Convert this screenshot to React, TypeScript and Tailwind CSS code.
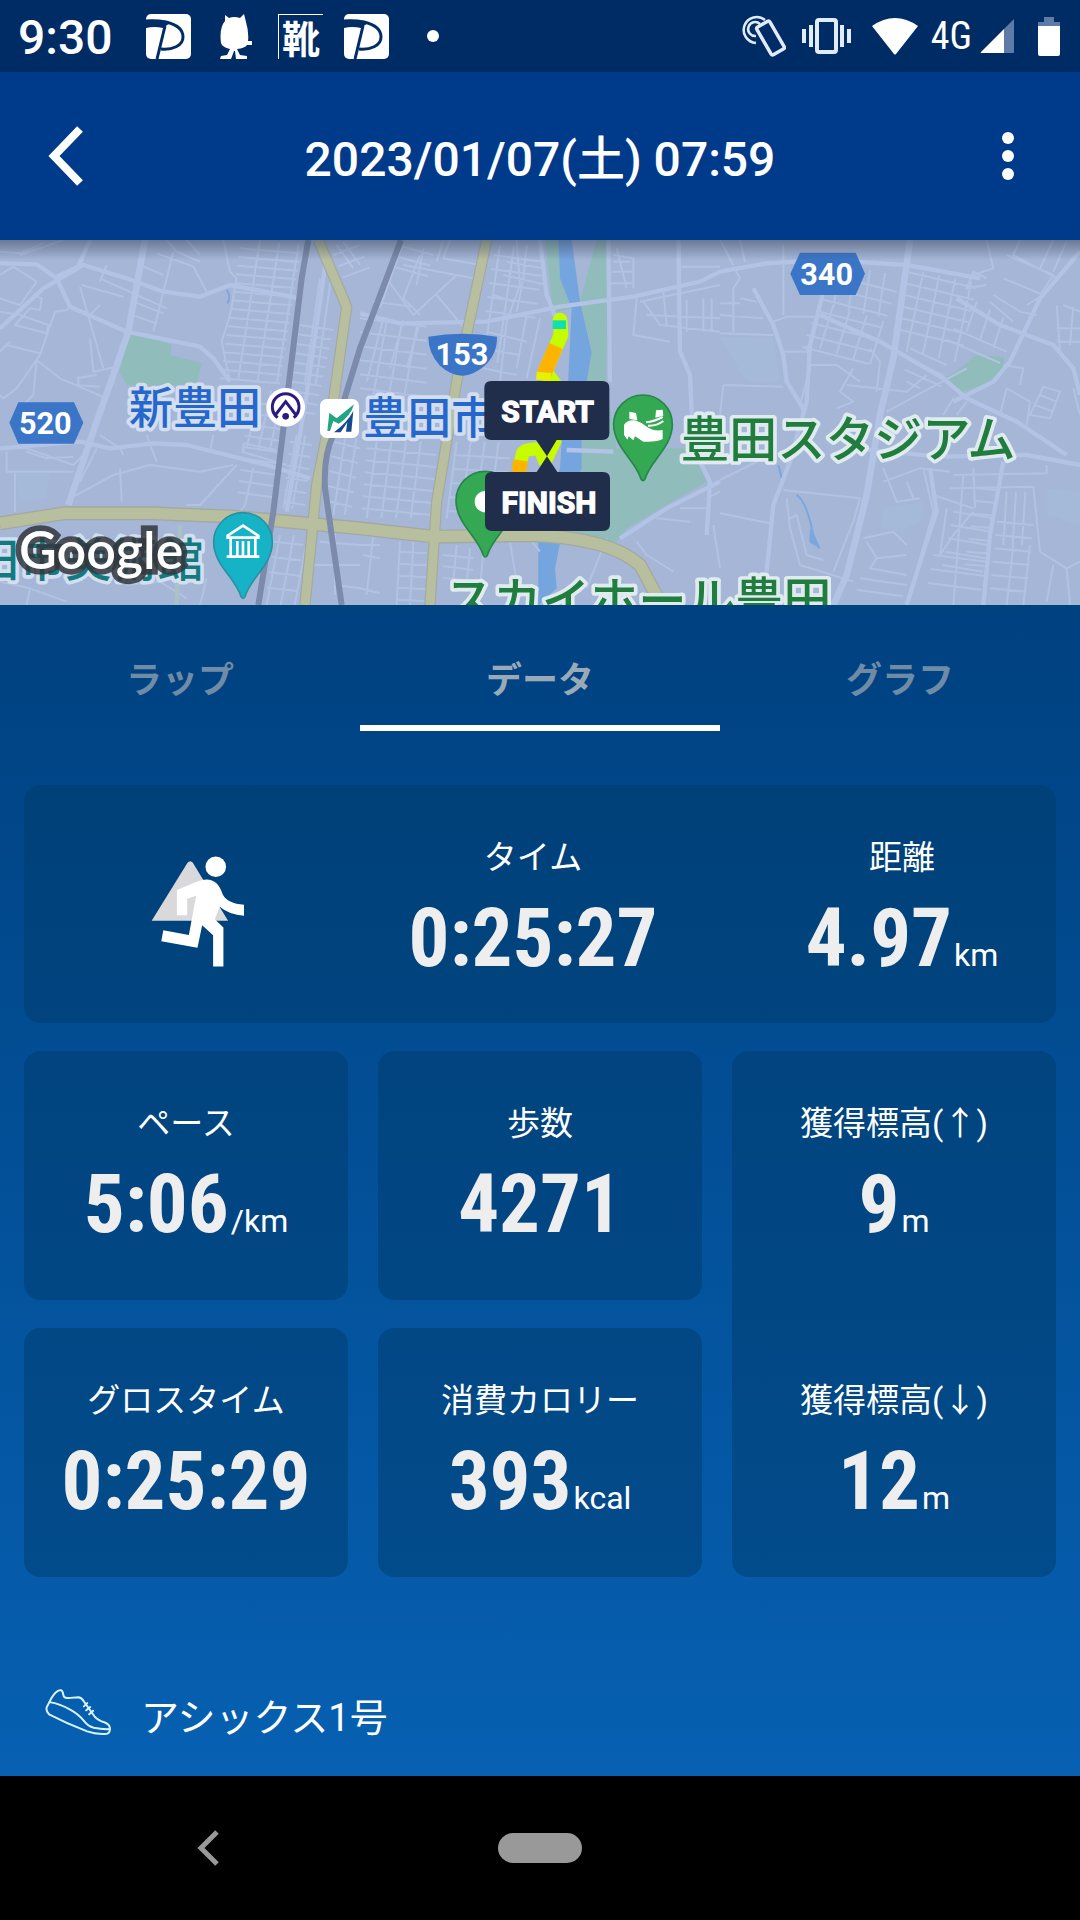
import React from 'react';

const ROBOTO = "font-['Roboto','Noto_Sans_CJK_JP',sans-serif]";

interface MetricProps {
  label: string;
  value: string;
  unit?: string;
}

function Metric({ label, value, unit }: MetricProps) {
  return (
    <div className="flex h-[249px] flex-col items-center pt-12">
      <dt className="text-[33px] leading-[50px]">{label}</dt>
      <dd className="flex items-baseline gap-0.5 pt-2">
        <span className="font-['Roboto_Condensed','Liberation_Sans_Narrow','Roboto',sans-serif] text-[81px] leading-[96px] font-bold text-[#eee]">
          {value}
        </span>
        {unit && <span className="text-[32px]">{unit}</span>}
      </dd>
    </div>
  );
}

function PayIcon() {
  return (
    <svg viewBox="0 0 45 45" className="h-[45px] w-[45px]" aria-hidden="true">
      <rect width="45" height="45" rx="5" fill="#fff" />
      <path d="M0 7Q10 6 20 8Q37 12 37 23C37 32 26 36 15 35" fill="none" stroke="#002d66" strokeWidth="3" />
      <path d="M0 6Q12 5 24 9L17 14Q8 12 0 14Z" fill="#002d66" />
      <path d="M19 12L11 45" stroke="#002d66" strokeWidth="3" />
    </svg>
  );
}

function StatusBar() {
  return (
    <div className="flex h-[72px] items-center justify-between bg-[#002c66] pr-5 pl-[18px] text-white">
      <div className="flex items-center">
        <span className="w-32 pt-1 text-5xl font-medium">9:30</span>
        <PayIcon />
        <svg viewBox="0 0 33 45" className="ml-[29px] h-[45px] w-[33px]" aria-hidden="true">
          <path
            d="M5 1L9 4Q14 2 20 4L24 0L26 8Q29 18 28 27L32 27L32 31L27 31Q25 34 17 35L20 41L27 42L27 45H16L15 37H14L11 45H0L1 42L7 41L10 35Q2 33 1 29Q-1 14 5 7Z"
            fill="#fff"
          />
        </svg>
        <span className="ml-[25px] flex h-[45px] w-[45px] items-center justify-center border-t border-l border-white font-['Noto_Sans_CJK_JP',sans-serif] text-[38px] leading-none font-bold">
          靴
        </span>
        <span className="ml-[21px]">
          <PayIcon />
        </span>
        <span className="ml-[38px] h-3 w-3 rounded-full bg-white" />
      </div>
      <div className="flex items-center">
        <svg viewBox="0 0 44 42" className="h-[42px] w-11" fill="none" stroke="#e2ebfa" aria-hidden="true">
          <rect x="21" y="7" width="15" height="32" rx="2" strokeWidth="3.5" transform="rotate(-30 28.5 23)" />
          <path d="M14 28A13 13 0 1 1 23 5" strokeWidth="2.5" />
          <path d="M14 21A7 7 0 1 1 18 9" strokeWidth="2.5" />
        </svg>
        <svg viewBox="0 0 49 36" className="ml-4 h-9 w-[49px]" fill="#e2ebfa" aria-hidden="true">
          <path d="M0 11h4v14H0zM7 7h4v22H7zM38 7h4v22h-4zM45 11h4v14h-4z" />
          <rect x="15" y="2" width="19" height="32" rx="2" fill="none" stroke="#e2ebfa" strokeWidth="4" />
        </svg>
        <svg viewBox="0 0 46 37" className="ml-[21px] h-[37px] w-[46px]" aria-hidden="true">
          <path d="M0 8Q23 -8 46 8L24 36Q23 37 22 36Z" fill="#fff" />
        </svg>
        <span className="ml-[13px] font-['Roboto_Condensed','Liberation_Sans_Narrow','Roboto',sans-serif] text-[38px]">4G</span>
        <svg viewBox="0 0 34 34" className="ml-2 h-[34px] w-[34px]" aria-hidden="true">
          <path d="M34 0V34H24V10Z" fill="#5d7ba6" />
          <path d="M24 10V34H1Q0 34 1 33Z" fill="#fff" />
        </svg>
        <svg viewBox="0 0 22 39" className="ml-6 h-[39px] w-[22px]" aria-hidden="true">
          <path d="M6 0H16V5H22V9H0V5H6Z" fill="#5d7ba6" />
          <path d="M0 9H22V37Q22 39 20 39H2Q0 39 0 37Z" fill="#fff" />
        </svg>
      </div>
    </div>
  );
}

// Parallel line segments, each one shifted by (dx, dy) from the last
function hatch(x1: number, y1: number, x2: number, y2: number, dx: number, dy: number, count: number) {
  return Array.from({ length: count }, (_, i) => `M${x1 + dx * i} ${y1 + dy * i}L${x2 + dx * i} ${y2 + dy * i}`).join('');
}

const WEST_STREETS = [
  'M0 85L110 88L170 130L210 215L380 290M0 50L60 55L130 25M60 60L190 15M0 120L40 95L110 140L60 210L0 190M0 230L60 240L145 270L140 295L45 270L90 220L120 225L125 190L100 180',
  'M165 230L200 225L210 215M165 230L120 360L50 460L10 490L0 480M20 330L120 355M0 350L30 320M110 375L100 480L60 520M110 375L180 430L320 490M240 155L310 400M245 150L370 185M270 240L300 210M270 310L280 410L350 395M230 430L290 420M225 450L300 455M235 425V450',
  'M300 130L410 180L500 220M320 90L300 140M420 90L490 120M400 200L490 235M395 240L470 265M520 50L460 290M470 55L580 95L620 170M500 15L530 50L600 80M560 15L600 60M670 15L690 110L710 130L690 240L665 320L690 440',
  'M0 640H80L220 690L270 640M20 650V710H220M45 715V830M80 650L140 670L220 665M290 640L240 740M300 600L360 640L370 660M360 700L365 800M210 790L340 720L450 690L600 710L700 690M440 600L470 680M640 600L630 650M710 690L600 810L560 810M760 700L735 810L720 830',
  'M730 625L830 645M725 650L860 690M730 625V655M0 1040L90 1060L80 1110M90 1060L200 1100M380 1050L480 1040L560 1090M620 1030L600 1110M460 890L470 1000M1005 890V1080M960 920L1080 930M930 990H1080M1010 1050L1080 1060',
  hatch(720, 40, 900, 55, -4, 26, 16),
  hatch(780, 15, 715, 430, 58, 6, 3),
  hatch(900, 270, 1000, 285, -6, 28, 10),
  hatch(960, 130, 915, 440, 32, 8, 2),
  hatch(780, 460, 740, 640, 34, 6, 3),
  hatch(745, 500, 850, 515, -4, 34, 9),
  hatch(870, 620, 935, 630, -4, 36, 6),
  hatch(890, 600, 850, 820, 26, 2, 2),
  hatch(840, 900, 800, 1110, 42, 0, 3),
  hatch(820, 920, 910, 930, -6, 46, 4),
  hatch(1000, 620, 1080, 640, -6, 44, 5),
  hatch(1035, 610, 1000, 840, 34, 0, 2),
  hatch(1000, 60, 1080, 30, 14, 34, 3),
  hatch(1030, 20, 1080, 90, -20, 10, 2),
].join('');

const CENTER_STREETS = [
  'M130 20L60 220M180 60L130 190L180 240M130 90L340 130M80 130L160 240L290 120M190 40L170 150M250 15L230 80M40 200L160 215M70 250L20 440M130 255L90 400M180 260L140 400M230 180L330 300M270 15L250 70L360 90',
  'M470 15L480 150L440 260L420 440M500 30L490 130L470 230M440 80L550 100M430 120L560 150M400 180L460 200M380 290L500 320M370 340L480 360M370 400L470 420M500 240L470 400M540 250L500 430',
  'M840 200L1080 150M830 190L820 300L930 320M850 200L900 270L1080 290M910 170L920 270M860 240L1080 250M980 195V290M1030 190V290M1055 190V290M760 60L820 70L820 160M770 40L800 160M960 30V340M960 95H1080M760 80H810M755 110H815M750 145H815',
  'M830 920L860 960L940 1010M740 910L680 1060M450 920L470 1040M500 900L540 950M960 820H1040M890 850L990 860M1040 790L1080 770M1060 870L1080 1000M0 930H60M10 960L60 970M40 900L20 1080M0 1060L60 1075',
  hatch(110, 30, 220, 60, -8, 32, 3),
  hatch(400, 60, 550, 80, -6, 42, 5),
  hatch(420, 30, 370, 380, 42, 4, 2),
  hatch(0, 250, 200, 275, 0, 42, 6),
  hatch(80, 260, 40, 480, 46, 4, 3),
  hatch(20, 640, 230, 660, -3, 36, 6),
  hatch(50, 620, 20, 850, 44, 0, 4),
  hatch(290, 620, 260, 850, 42, 0, 4),
  hatch(280, 660, 450, 670, -3, 42, 5),
  hatch(120, 920, 110, 1110, 40, 0, 2),
  hatch(115, 950, 200, 955, 0, 36, 5),
  hatch(290, 930, 280, 1040, 40, 10, 3),
  hatch(250, 960, 340, 970, 0, 34, 3),
].join('');

const EAST_STREETS = [
  'M0 15L40 90M60 15L75 80M40 95L60 130L40 160V290M0 205H60M0 240L130 250M0 295L160 300M60 190L110 200M190 30V240M160 260L200 245H290M190 350H260M10 450L190 455M10 450L0 540M200 440L250 530M260 330L270 400L240 510',
  'M270 390L350 390L420 440M400 400L360 470L400 500L350 520M380 450L560 470L620 420M500 530L740 400M560 440L600 460M450 340L480 380L470 470M0 735L130 670M0 835L150 865M190 765L420 790L400 860L340 1010M200 790L210 880L240 990L400 1040M210 850L230 840L260 960L310 975',
  'M490 700L530 800L600 790M490 740L600 700L690 710M560 740L580 790M610 700L640 830L620 900L560 1110M700 720L980 715V690M690 760L940 755L960 950L1040 1000L1080 980M760 700L765 820M640 780L760 820M680 820L660 960L700 900L760 830',
  'M800 130L760 110L740 160L800 150M860 60L1000 120L960 180M900 15L880 60L1010 130M850 130L970 180L920 210M820 180L900 230L950 240M810 200L880 260M800 15L820 100L760 120M1000 15L960 100M1040 20L1000 110M1010 210L1020 350M1060 215L1050 330M1030 210L1080 230M1010 280H1080M1010 320H1080',
  'M850 390L910 400L900 450M860 460L840 540M860 460L930 500L920 570M970 455L1020 470L990 550L930 540ZM960 480L1010 500M945 510L1000 530M1060 460L1080 540M700 490L670 540M740 500L710 540M430 910L520 890L560 930M440 920L470 970L560 960M470 970L450 1000L560 1020M1000 990L980 1100M1040 1000L1050 1110',
  hatch(330, 120, 530, 170, -14, 36, 7),
  hatch(340, 210, 300, 340, 50, 16, 4),
  hatch(360, 90, 340, 220, 45, 8, 4),
  hatch(560, 110, 770, 160, -8, 34, 6),
  hatch(610, 110, 560, 350, 48, 10, 4),
  hatch(570, 340, 680, 390, -8, 32, 3),
  hatch(770, 760, 830, 765, -6, 38, 7),
  hatch(700, 830, 820, 850, -8, 40, 5),
  hatch(860, 770, 850, 930, 28, 0, 3),
  hatch(830, 860, 940, 870, -4, 40, 6),
  hatch(420, 1030, 560, 1050, -10, 34, 2),
  hatch(730, 720, 700, 1110, 60, 0, 1),
  hatch(880, 930, 860, 1110, 50, 0, 2),
  hatch(640, 960, 800, 980, -8, 42, 3),
  hatch(770, 200, 740, 290, 40, 24, 3),
  hatch(700, 280, 860, 350, -20, 34, 2),
].join('');

function RouteMap() {
  return (
    <svg
      viewBox="0 15 3240 1095"
      preserveAspectRatio="xMidYMid slice"
      className="block h-[365px] w-full bg-[#a5b6d7]"
      role="img"
      aria-label="ルートマップ"
    >
      <defs>
        <linearGradient id="headerShadow" x1="0" y1="0" x2="0" y2="1">
          <stop offset="0" stopColor="#3c465c" stopOpacity="0.55" />
          <stop offset="1" stopColor="#3c465c" stopOpacity="0" />
        </linearGradient>
      </defs>

      {/* Parks and water */}
      <g fill="#90bcbb">
        <path d="M390 290L515 330L510 360L605 385L590 450H380L358 410Z" />
        <path d="M1635 15H1675L1680 130L1715 220L1660 235Z" />
        <path d="M1790 15H1830L1822 220L1818 440L1850 640L2070 640L2120 740L1880 880L1850 920L1720 910L1700 880L1745 700L1745 440L1775 340L1740 200Z" />
        <path d="M2830 435L2900 385L2925 362L3010 365Q3020 390 2985 440L2870 475Z" />
      </g>
      <g fill="#a5bad8">
        <path d="M45 715H150L140 790L60 800Z" />
        <path d="M2160 305L2320 310L2340 440L2240 440Z" />
        <path d="M2650 820L2770 800L2760 860L2700 890L2640 880Z" />
        <path d="M3140 760L3240 770V870L3140 840Z" />
      </g>
      <path
        d="M1675 15L1680 130L1715 220L1705 430L1685 620L1680 700L1615 890V1110L1670 1060L1665 1000L1685 900L1705 800L1745 700V620L1760 440L1775 350L1740 200L1715 15Z"
        fill="#74a5df"
      />
      <path
        d="M680 165Q695 185 682 205M2335 690L2345 730M2390 780Q2420 800 2440 900L2458 940"
        fill="none"
        stroke="#7ba6df"
        strokeWidth="6"
      />
      <path d="M2430 880L2458 940L2428 922Z" fill="#7ba6df" />

      {/* Streets */}
      <g fill="none" stroke="#b2c2e3" strokeWidth="6" strokeLinejoin="round">
        <path d={WEST_STREETS} />
        <path d={CENTER_STREETS} transform="translate(1080 0)" />
        <path d={EAST_STREETS} transform="translate(2160 0)" />
      </g>
      <g fill="none" stroke="#b2c3e6" strokeWidth="13" strokeLinejoin="round">
        <path d="M435 15L385 290L340 420L290 560L205 810" strokeWidth="20" />
        <path d="M0 85L110 88L170 130L210 215L380 290L600 335L640 370L690 440M0 280L130 160L250 90L380 130L490 170L600 185L690 150L900 190M270 15L235 95L160 130M0 640L240 620L330 640L460 625L560 630L800 690L930 730M980 60L920 480L860 830" />
        <path d="M1080 235L1200 265L1460 260L1680 215L1900 185L2100 140L2160 110L2300 85L2480 75L2720 90L2940 130M1620 15L1640 180L1680 280M1825 15L1830 440M1840 650L1700 645M2035 15L2040 350L2070 420L2080 640L2130 740L2120 900M1860 910L2000 820L2160 740" />
        <path d="M2730 15L2680 370L2640 540L2600 780L2540 1020L2500 1110" strokeWidth="20" />
        <path d="M2260 160L2320 270L2350 360L2360 440L2410 520M2480 130L2430 330L2420 500L2370 680L2320 810L2300 1010M2460 240L2640 320L2830 430L2900 490L3050 560L3200 660M2870 190L3000 270L3160 330L3220 400L3240 480M3240 50L3120 190L3030 380L2980 440L2860 500M2560 640L2820 665L3080 660L3240 690M3010 680L2970 900L2950 1110M2790 700L2810 830L2780 920L2720 1110" />
      </g>

      {/* Main roads */}
      <g fill="none" strokeLinejoin="round">
        <g stroke="#a3a99f" strokeWidth="42">
          <path d="M0 865L190 835L460 835L700 845L1080 880L1300 905L1600 900Q1830 910 1920 990L1985 1110" />
          <path d="M955 15L1040 215L1000 500L950 750L915 1110M1460 15L1370 440L1310 800L1290 1110" strokeWidth="34" />
        </g>
        <g stroke="#b8bf9f" strokeWidth="34">
          <path d="M0 865L190 835L460 835L700 845L1080 880L1300 905L1600 900Q1830 910 1920 990L1985 1110" />
          <path d="M955 15L1040 215L1000 500L950 750L915 1110M1460 15L1370 440L1310 800L1290 1110" strokeWidth="27" />
        </g>
        <path d="M540 870L530 1110" stroke="#a9c2c8" strokeWidth="14" />
        <path d="M925 15L905 130L860 500L820 830L775 1110M1203 15L1080 340L1000 600Q970 660 975 760L1025 1110" stroke="#7c8bab" strokeWidth="18" />
      </g>

      {/* Place names */}
      <g
        fontFamily="'Noto Sans CJK JP', sans-serif"
        fontWeight="500"
        strokeWidth="22"
        strokeLinejoin="round"
        paintOrder="stroke"
        stroke="#d3deef"
      >
        <text x="387" y="567" fontSize="132" fill="#2567cc">新豊田</text>
        <text x="1090" y="597" fontSize="132" fill="#2567cc">豊田市</text>
        <text x="610" y="1022" fontSize="138" fill="#137b80" textAnchor="end">豊田市美術館</text>
        <text x="2042" y="667" fontSize="145" fill="#207d3d" stroke="#e0ebf0">豊田スタジアム</text>
        <text x="1335" y="1150" fontSize="145" fill="#207d3d" stroke="#e0ebf0">スカイホール豊田</text>
      </g>

      {/* Route signs */}
      <g fill="#3a75c7">
        <path d="M55 502H222L250 563L222 626H55L28 563Z" />
        <path d="M2400 53H2567L2595 116L2567 180H2400L2371 116Z" />
        <path d="M1285 305Q1388 288 1491 305Q1492 360 1450 395Q1420 420 1388 422Q1350 420 1320 392Q1285 355 1285 305Z" />
      </g>
      <g fontFamily="Roboto, sans-serif" fontWeight="700" fontSize="92" fill="#fff" textAnchor="middle">
        <text x="136" y="597">520</text>
        <text x="2480" y="149">340</text>
        <text x="1386" y="389">153</text>
      </g>

      {/* Stations */}
      <circle cx="857" cy="517" r="58" fill="#fff" />
      <path d="M833 548A40 40 0 1 1 881 548M826 540L857 500L888 540" fill="none" stroke="#2b1a82" strokeWidth="9" />
      <circle cx="857" cy="544" r="10" fill="#2b1a82" />
      <rect x="960" y="492" width="117" height="117" rx="20" fill="#fff" />
      <path d="M982 588L988 533L1010 550L1062 508Q1052 545 1016 566L1000 558L990 588Z" fill="#22a582" />
      <path d="M1002 592Q1042 562 1060 528L1054 590H1038L1042 562L1022 592Z" fill="#174a8e" />

      {/* Pins */}
      <g strokeWidth="5">
        <path d="M729 833A88 88 0 0 1 817 921C817 990 750 1030 735 1085Q729 1095 723 1085C708 1030 641 990 641 921A88 88 0 0 1 729 833Z" fill="#16b3c6" stroke="#2c8fa4" />
        <path d="M1929 480A88 88 0 0 1 2017 568C2017 637 1950 677 1935 732Q1929 742 1923 732C1908 677 1841 637 1841 568A88 88 0 0 1 1929 480Z" fill="#34a853" stroke="#27864a" />
        <path d="M1456 709A88 88 0 0 1 1544 797C1544 866 1477 906 1462 961Q1456 971 1450 961C1435 906 1368 866 1368 797A88 88 0 0 1 1456 709Z" fill="#34a853" stroke="#27864a" />
      </g>
      <path d="M683 902L729 872L775 902V908H683ZM680 965H778M692 908V962M766 908V962M712 918V962M729 918V962M746 918V962" fill="none" stroke="#fff" strokeWidth="8" />
      <path d="M1872 570Q1880 554 1905 556Q1925 562 1945 578Q1965 590 1988 585V612Q1970 622 1930 620L1905 604L1900 616L1886 604L1882 614L1872 600ZM1888 530L1908 534L1912 556L1888 552ZM1968 526L1988 524L1990 542L1966 548Z" fill="#fff" />
      <path d="M1938 562Q1962 560 1988 546M1944 572Q1968 574 1990 558" fill="none" stroke="#fff" strokeWidth="6" />
      <circle cx="1456" cy="800" r="32" fill="#fff" />

      {/* Run track */}
      <g fill="none" strokeWidth="44" strokeLinejoin="round">
        <path d="M1680 255L1683 300L1635 410L1680 470" stroke="#c6fb00" strokeLinecap="round" />
        <path d="M1668 333L1635 410L1632 420" stroke="#fdb400" />
        <path d="M1678 256V282" stroke="#10e0b0" strokeWidth="40" />
        <path d="M1632 412L1630 436" stroke="#e6f000" />
        <path d="M1560 690L1568 655Q1575 640 1620 642L1635 680L1668 610" stroke="#c6fb00" strokeWidth="40" />
        <path d="M1556 712L1562 676" stroke="#fdb400" />
      </g>
      <path
        d="M1474 438H1807Q1828 438 1828 459V594Q1828 615 1807 615H1670L1641 664L1672 711H1809Q1830 711 1830 732V867Q1830 888 1809 888H1476Q1455 888 1455 867V732Q1455 711 1476 711H1610L1641 664L1608 615H1474Q1453 615 1453 594V459Q1453 438 1474 438Z"
        fill="#202e4c"
      />
      <g
        fontFamily="Roboto, sans-serif"
        fontWeight="700"
        fontSize="90"
        fill="#fff"
        stroke="#fff"
        strokeWidth="4"
        textAnchor="middle"
      >
        <text x="1643" y="561">START</text>
        <text x="1647" y="835">FINISH</text>
      </g>

      <text
        x="57"
        y="1002"
        fontFamily="Lato, sans-serif"
        fontSize="156"
        fontWeight="600"
        fill="#fff"
        stroke="#33373d"
        strokeWidth="34"
        strokeOpacity="0.85"
        paintOrder="stroke"
      >
        Google
      </text>
      <rect y="15" width="3240" height="60" fill="url(#headerShadow)" />
    </svg>
  );
}

function RunnerIcon() {
  return (
    <svg viewBox="150 110 280 333" className="h-[111px] w-[93px]" aria-hidden="true">
      <path d="M260 130Q268 120 276 130L382 304H152Z" fill="#d9d9dc" />
      <circle cx="345" cy="142" r="31" fill="#fff" />
      <path
        d="M228 212L290 186Q325 172 348 192Q358 202 366 225Q380 252 430 256V289Q385 286 357 262L342 300L368 325V442H337V348L304 318L290 386L181 366L187 333L264 347L286 229L259 238V288H228Z"
        fill="#fff"
      />
    </svg>
  );
}

function ShoeIcon() {
  return (
    <svg
      viewBox="132 142 204 146"
      className="h-12 w-[68px]"
      fill="none"
      stroke="#d8f4ff"
      strokeWidth="6"
      strokeLinecap="round"
      strokeLinejoin="round"
      aria-hidden="true"
    >
      <path d="M147 185Q158 160 174 150Q184 146 187 154L191 168Q196 174 210 172L236 170Q246 172 252 183L284 228Q294 240 316 247Q330 253 331 264Q332 278 322 281Q290 284 262 274Q200 250 146 222Q134 210 140 198Z" />
      <path d="M147 185Q180 190 210 208Q236 222 252 242Q264 258 282 263Q306 268 329 267" />
      <path d="M252 198L262 188M259 210L271 200M268 222L280 211" />
    </svg>
  );
}

const TABS = ['ラップ', 'データ', 'グラフ'];

export default function App() {
  return (
    <div className={`flex min-h-screen flex-col bg-black text-white ${ROBOTO}`}>
      <StatusBar />

      <header className="flex h-[168px] items-center justify-between bg-[#003b8b] px-12">
        <button type="button" aria-label="戻る" className="h-[60px] w-[60px]">
          <svg viewBox="0 0 35 60" className="h-[60px] w-[35px]" fill="none" stroke="#fff" strokeWidth="8">
            <path d="M32 3L6 30L32 57" />
          </svg>
        </button>
        <h1 className="pt-2 text-5xl font-medium">2023/01/07(土) 07:59</h1>
        <button type="button" aria-label="メニュー" className="flex h-[60px] w-[60px] flex-col items-center justify-center gap-1.5 pl-3">
          <span className="h-3 w-3 rounded-full bg-white" />
          <span className="h-3 w-3 rounded-full bg-white" />
          <span className="h-3 w-3 rounded-full bg-white" />
        </button>
      </header>

      <RouteMap />

      <main className="flex grow flex-col bg-linear-to-b from-[#004180] to-[#0760b2]">
        <div role="tablist" className="grid grid-cols-3">
          {TABS.map((tab) => (
            <button
              key={tab}
              type="button"
              role="tab"
              aria-selected={tab === 'データ'}
              className={`h-[126px] border-b-6 pt-8 text-4xl font-bold ${
                tab === 'データ' ? 'border-white text-[#9aa9b8]' : 'border-transparent text-[#6f8ba6]'
              }`}
            >
              {tab}
            </button>
          ))}
        </div>

        <div className="flex flex-col gap-7 px-6 pt-[54px]">
          <dl className="grid h-[238px] grid-cols-[294fr_430fr_308fr] rounded-2xl bg-[#003c6c]/50">
            <div className="flex items-center justify-center pt-1 pl-[52px]">
              <RunnerIcon />
            </div>
            <Metric label="タイム" value="0:25:27" />
            <Metric label="距離" value="4.97" unit="km" />
          </dl>

          <dl className="grid grid-cols-3 gap-x-[30px] gap-y-7">
            <div className="rounded-2xl bg-[#003c6c]/50">
              <Metric label="ペース" value="5:06" unit="/km" />
            </div>
            <div className="rounded-2xl bg-[#003c6c]/50">
              <Metric label="歩数" value="4271" />
            </div>
            <div className="row-span-2 flex flex-col gap-7 rounded-2xl bg-[#003c6c]/50">
              <Metric label="獲得標高(↑)" value="9" unit="m" />
              <Metric label="獲得標高(↓)" value="12" unit="m" />
            </div>
            <div className="rounded-2xl bg-[#003c6c]/50">
              <Metric label="グロスタイム" value="0:25:29" />
            </div>
            <div className="rounded-2xl bg-[#003c6c]/50">
              <Metric label="消費カロリー" value="393" unit="kcal" />
            </div>
          </dl>
        </div>

        <div className="mt-auto flex items-start gap-[29px] px-11 pb-7">
          <ShoeIcon />
          <span className="text-[38px] leading-[60px]">アシックス1号</span>
        </div>
      </main>

      <nav className="grid h-36 grid-cols-[415px_1fr_415px] items-center">
        <button type="button" aria-label="前の画面" className="flex justify-center">
          <svg viewBox="0 0 22 36" className="h-9 w-[22px]" fill="none" stroke="#999" strokeWidth="5">
            <path d="M20 2L4 18L20 34" />
          </svg>
        </button>
        <button type="button" aria-label="ホーム" className="h-[30px] w-[84px] justify-self-center rounded-full bg-[#999]" />
      </nav>
    </div>
  );
}
